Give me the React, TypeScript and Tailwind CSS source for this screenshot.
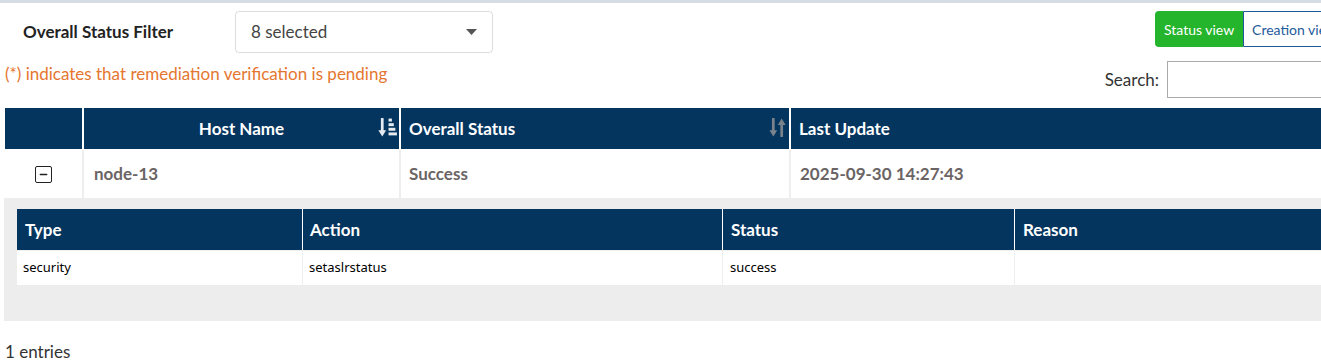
import { Minus } from 'lucide-react'

const HEAD = 'bg-[#04355f] text-white font-bold text-[17px]'

function SortDesc() {
  return (
    <svg width="19" height="21" viewBox="0 0 18 20" className="text-[#e6ebf0]">
      <path d="M4 1v14" stroke="currentColor" strokeWidth="2.6" />
      <path d="M0.3 12.5 4 18.5l3.7-6z" fill="currentColor" />
      <rect x="10" y="1.5" width="3.2" height="2.8" fill="currentColor" />
      <rect x="10" y="5.9" width="5" height="2.8" fill="currentColor" />
      <rect x="10" y="10.3" width="6.5" height="2.8" fill="currentColor" />
      <rect x="10" y="14.7" width="8" height="2.8" fill="currentColor" />
    </svg>
  )
}

function SortBoth() {
  return (
    <svg width="19" height="21" viewBox="0 0 18 20" className="text-[#7a838c]">
      <path d="M5 1v14" stroke="currentColor" strokeWidth="2.6" />
      <path d="M1.3 12.5 5 18.5l3.7-6z" fill="currentColor" />
      <path d="M13 5v14" stroke="currentColor" strokeWidth="2.6" />
      <path d="M9.3 7.5 13 1.5l3.7 6z" fill="currentColor" />
    </svg>
  )
}

export default function App() {
  return (
    <div className="h-[360px] w-[1321px] overflow-hidden bg-white font-['Lato',sans-serif] text-[#333]">
      <div className="h-[3px] bg-[#d5dce4]" />
      <div className="w-[1420px]">
        {/* Filter + vistas */}
        <div className="flex justify-between pr-[74px]">
          <div className="pt-[8px]">
            <div className="flex items-center">
              <span className="ml-[23px] w-[212px] text-[17px] font-bold text-[#222]">
                Overall Status Filter
              </span>
              <div className="flex h-[42px] w-[258px] items-center justify-between rounded-[4px] border border-[#ddd] pl-[15px] pr-[15px] text-[17px] text-[#444]">
                <span>8 selected</span>
                <svg width="11" height="6" viewBox="0 0 11 6">
                  <path d="M0 0h11L5.5 6z" fill="#555" />
                </svg>
              </div>
            </div>
            <p className="ml-[5px] mt-[10px] text-[17px] leading-[22px] text-[#e5762f]">
              (*) indicates that remediation verification is pending
            </p>
          </div>
          <div className="flex flex-col items-end pt-[8px]">
            <div className="flex h-[36px]">
              <button
                type="button"
                className="w-[88px] rounded-l-[4px] bg-[#25b52c] text-[14px] text-white"
              >
                Status view
              </button>
              <button
                type="button"
                className="rounded-r-[4px] border border-[#1e5a9a] bg-white px-[8px] text-[14px] text-[#1e5a9a]"
              >
                Creation view
              </button>
            </div>
            <div className="mt-[14px] flex items-center gap-[8px]">
              <span className="text-[17px] text-[#333]">Search:</span>
              <div className="h-[37px] w-[179px] border border-[#aaa]" />
            </div>
          </div>
        </div>

        {/* Tabla principal */}
        <div className="ml-[5px] mt-[10px] w-[1390px]">
          <div className="flex h-[42px] border-b border-white">
            <div className={`${HEAD} w-[79px] border-r-2 border-white`} />
            <div className={`${HEAD} relative flex w-[317px] items-center justify-center border-r-2 border-white`}>
              Host Name
              <span className="absolute right-[2px] top-[9px]">
                <SortDesc />
              </span>
            </div>
            <div className={`${HEAD} relative flex w-[390px] items-center border-r-2 border-white pl-[8px]`}>
              Overall Status
              <span className="absolute right-[2px] top-[9px]">
                <SortBoth />
              </span>
            </div>
            <div className={`${HEAD} flex flex-1 items-center pl-[8px]`}>Last Update</div>
          </div>
          <div className="flex h-[48px] text-[17px] font-bold text-[#6b6464]">
            <div className="flex w-[79px] items-center justify-center border-r-2 border-[#eee]">
              <span className="flex h-[17px] w-[17px] items-center justify-center rounded-[2px] border-[1.5px] border-[#222] text-[#222]">
                <Minus size={11} strokeWidth={3} />
              </span>
            </div>
            <div className="flex w-[317px] items-center border-r-2 border-[#eee] pl-[10px]">node-13</div>
            <div className="flex w-[390px] items-center border-r-2 border-[#eee] pl-[8px]">Success</div>
            <div className="flex flex-1 items-center pl-[9px]">2025-09-30 14:27:43</div>
          </div>
        </div>

        {/* Detalle */}
        <div className="ml-[4px] w-[1391px] bg-[#ededed] pb-[36px] pl-[13px] pt-[11px]">
          <div className="flex h-[42px] border-b border-[#f0f0f0]">
            <div className={`${HEAD} flex w-[286px] items-center border-r border-white pl-[8px]`}>Type</div>
            <div className={`${HEAD} flex w-[420px] items-center border-r border-white pl-[7px]`}>Action</div>
            <div className={`${HEAD} flex w-[292px] items-center border-r border-white pl-[8px]`}>Status</div>
            <div className={`${HEAD} flex flex-1 items-center pl-[8px]`}>Reason</div>
          </div>
          <div className="flex h-[34px] bg-white font-['Noto_Sans',sans-serif] text-[13px] text-black">
            <div className="flex w-[286px] items-center border-r border-[#eee] pl-[6px]">security</div>
            <div className="flex w-[420px] items-center border-r border-[#eee] pl-[6px]">setaslrstatus</div>
            <div className="flex w-[292px] items-center border-r border-[#eee] pl-[7px]">success</div>
            <div className="flex-1" />
          </div>
        </div>

        <p className="ml-[5px] mt-[20px] text-[17px] leading-[22px] text-[#333]">1 entries</p>
      </div>
    </div>
  )
}
